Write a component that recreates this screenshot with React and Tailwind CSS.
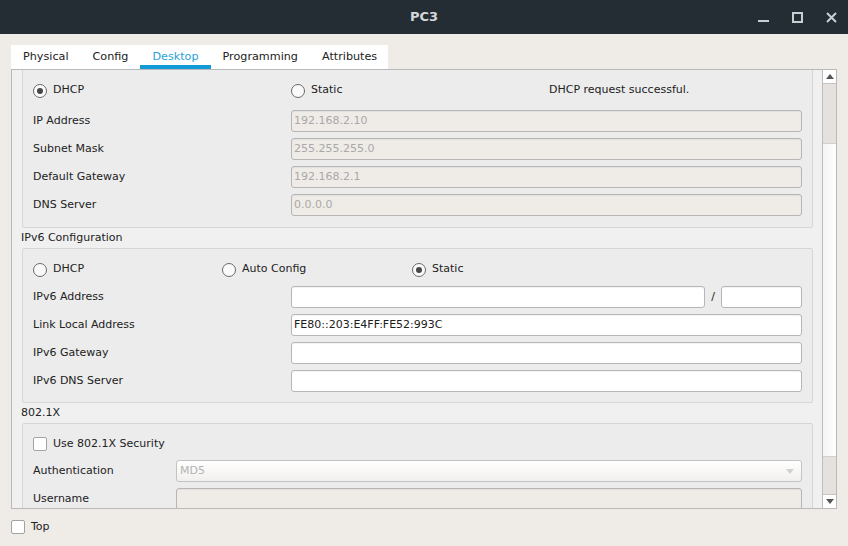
import React from 'react';

function Radio({ checked, label }) {
    return (
        <div className="flex items-center">
            <span className="w-[14px] h-[14px] rounded-full border border-[#6a6a6a] bg-[#fafafa] flex items-center justify-center">
                {checked && <span className="w-[6px] h-[6px] rounded-full bg-[#474747]" />}
            </span>
            <span className="ml-[6px]">{label}</span>
        </div>
    );
}

function Check({ label }) {
    return (
        <div className="flex items-center">
            <span className="w-[14px] h-[14px] rounded-[2px] border border-[#a3a3a3] bg-white" />
            {label && <span className="ml-[6px]">{label}</span>}
        </div>
    );
}

function Field({ value, disabled, className = 'flex-1' }) {
    return (
        <div
            className={`${className} h-[22px] rounded-[3px] border border-[#b6b6b6] flex items-center pl-[2px] shadow-[inset_0_1px_1px_rgba(0,0,0,0.05)] ${
                disabled ? 'bg-[#efebe7] text-[#a9a9a9]' : 'bg-white text-[#202020]'
            }`}
        >
            {value}
        </div>
    );
}

function Row({ label, labelWidth = 'w-[258px]', children }) {
    return (
        <div className="flex items-center h-[22px] shrink-0">
            <div className={`${labelWidth} shrink-0 pt-[1px]`}>{label}</div>
            {children}
        </div>
    );
}

function Triangle({ up, color = '#555555' }) {
    return (
        <svg width="8" height="5" viewBox="0 0 8 5">
            <polygon points={up ? '0,5 8,5 4,0' : '0,0 8,0 4,5'} fill={color} />
        </svg>
    );
}

export default function App() {
    const tabs = ['Physical', 'Config', 'Desktop', 'Programming', 'Attributes'];

    return (
        <div className="w-[848px] h-[546px] overflow-hidden bg-[#efebe7] text-[11px] text-[#222222] font-['DejaVu_Sans','Liberation_Sans',sans-serif] flex flex-col">
            {/* Title bar */}
            <div className="h-[34px] shrink-0 bg-[#242d33] grid grid-cols-[1fr_auto_1fr] items-center">
                <div />
                <div className="text-[13px] font-bold text-[#d3d7da]">PC3</div>
                <div className="flex justify-end items-center gap-[23px] pr-[11px] text-[#c9ced1]">
                    <svg width="11" height="11" viewBox="0 0 11 11">
                        <rect x="0" y="8" width="11" height="2" fill="currentColor" />
                    </svg>
                    <svg width="11" height="11" viewBox="0 0 11 11">
                        <rect x="1" y="1" width="9" height="9" fill="none" stroke="currentColor" strokeWidth="2" />
                    </svg>
                    <svg width="11" height="11" viewBox="0 0 11 11">
                        <path d="M1 1 L10 10 M10 1 L1 10" stroke="currentColor" strokeWidth="2" />
                    </svg>
                </div>
            </div>

            {/* Tabs */}
            <div className="mt-[11px] ml-[11px] flex h-[24px] w-[377px] shrink-0 bg-white">
                {tabs.map((t) => (
                    <div
                        key={t}
                        className={`px-3 pt-[5px] flex items-center border-b-[4px] text-[11.2px] ${
                            t === 'Desktop'
                                ? 'border-[#129bd6] text-[#2aa2d8]'
                                : 'border-transparent text-[#222222]'
                        }`}
                    >
                        {t}
                    </div>
                ))}
            </div>

            {/* Content */}
            <div className="ml-[11px] w-[826px] h-[440px] shrink-0 border border-[#b9b9b9] bg-[#f0f0f0] flex">
                <div className="w-[810px] overflow-hidden flex flex-col pl-[10px]">
                    {/* IPv4 box */}
                    <div className="-mt-[10px] shrink-0 w-[791px] border border-[#d6d6d6] rounded-[2px] bg-[#ececec] px-[10px] pt-[18px] pb-[11px]">
                        <div className="flex items-center h-[22px] pt-[1px]">
                            <div className="w-[258px]">
                                <Radio checked label="DHCP" />
                            </div>
                            <div className="w-[258px]">
                                <Radio label="Static" />
                            </div>
                            <div>DHCP request successful.</div>
                        </div>
                        <div className="mt-[9px] flex flex-col gap-[6px]">
                            <Row label="IP Address">
                                <Field disabled value="192.168.2.10" />
                            </Row>
                            <Row label="Subnet Mask">
                                <Field disabled value="255.255.255.0" />
                            </Row>
                            <Row label="Default Gateway">
                                <Field disabled value="192.168.2.1" />
                            </Row>
                            <Row label="DNS Server">
                                <Field disabled value="0.0.0.0" />
                            </Row>
                        </div>
                    </div>

                    <div className="h-[20px] shrink-0 flex items-center -ml-[1px] pt-[1px]">IPv6 Configuration</div>

                    {/* IPv6 box */}
                    <div className="shrink-0 w-[791px] border border-[#d6d6d6] rounded-[2px] bg-[#ececec] px-[10px] pt-[9px] pb-[10px]">
                        <div className="flex items-center h-[22px] pt-[1px]">
                            <div className="w-[189px]">
                                <Radio label="DHCP" />
                            </div>
                            <div className="w-[190px]">
                                <Radio label="Auto Config" />
                            </div>
                            <Radio checked label="Static" />
                        </div>
                        <div className="mt-[6px] flex flex-col gap-[6px]">
                            <Row label="IPv6 Address">
                                <Field value="" />
                                <div className="w-[16px] text-center">/</div>
                                <Field value="" className="w-[81px]" />
                            </Row>
                            <Row label="Link Local Address">
                                <Field value="FE80::203:E4FF:FE52:993C" />
                            </Row>
                            <Row label="IPv6 Gateway">
                                <Field value="" />
                            </Row>
                            <Row label="IPv6 DNS Server">
                                <Field value="" />
                            </Row>
                        </div>
                    </div>

                    <div className="h-[20px] shrink-0 flex items-center -ml-[1px] pt-[1px]">802.1X</div>

                    {/* 802.1X box */}
                    <div className="shrink-0 w-[791px] border border-[#d6d6d6] rounded-[2px] bg-[#ececec] px-[10px] pt-[9px] pb-[10px]">
                        <div className="flex items-center h-[22px]">
                            <Check label="Use 802.1X Security" />
                        </div>
                        <div className="mt-[5px] flex flex-col gap-[6px]">
                            <Row label="Authentication" labelWidth="w-[143px]">
                                <div className="flex-1 h-[22px] rounded-[3px] border border-[#c3c3c3] bg-gradient-to-b from-white to-[#f2f0ed] flex items-center justify-between pl-[3px] pr-[7px] text-[#b3b3b3]">
                                    <span>MD5</span>
                                    <Triangle color="#d2d2d2" />
                                </div>
                            </Row>
                            <Row label="Username" labelWidth="w-[143px]">
                                <Field disabled value="" />
                            </Row>
                        </div>
                    </div>
                </div>

                {/* Scrollbar */}
                <div className="w-[14px] border-l border-[#bcbcbc] flex flex-col">
                    <div className="h-[14px] shrink-0 border-b border-[#c4c4c4] bg-white flex items-center justify-center">
                        <Triangle up />
                    </div>
                    <div className="h-[59px] shrink-0 bg-[#e4e1de]" />
                    <div className="h-[314px] shrink-0 bg-gradient-to-r from-[#f4f4f4] to-white border-y border-[#d0d0d0]" />
                    <div className="flex-1 bg-[#e4e1de]" />
                    <div className="h-[14px] shrink-0 border-t border-[#c4c4c4] bg-white flex items-center justify-center">
                        <Triangle />
                    </div>
                </div>
            </div>

            {/* Bottom */}
            <div className="mt-[10px] ml-[11px]">
                <Check label="Top" />
            </div>
        </div>
    );
}
